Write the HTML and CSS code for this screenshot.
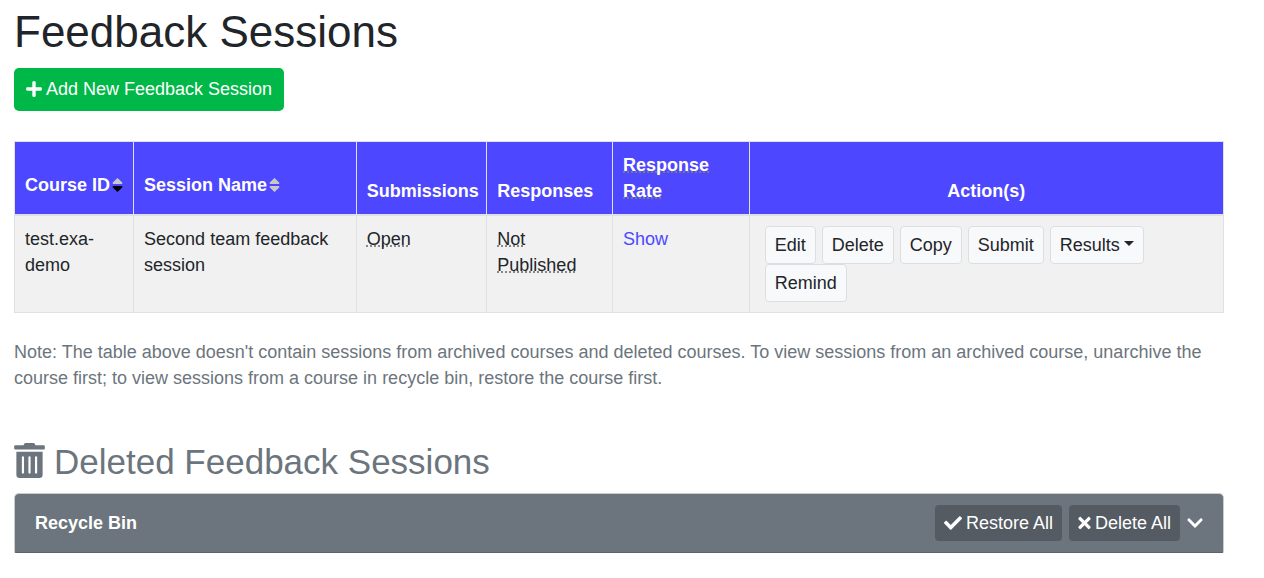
FILE: index.html
```html
<!DOCTYPE html>
<html lang="en">
<head>
<meta charset="utf-8">
<meta name="viewport" content="width=device-width, initial-scale=1">
<title>Feedback Sessions</title>
<link rel="stylesheet" href="styles.css">
</head>
<body>
<main class="page">
  <h1 class="page-title">Feedback Sessions</h1>
  <button type="button" class="btn btn-success">
    <svg class="icon icon-plus" viewBox="0 0 448 512" aria-hidden="true"><path d="M416 208H272V64c0-17.67-14.33-32-32-32h-32c-17.67 0-32 14.33-32 32v144H32c-17.67 0-32 14.33-32 32v32c0 17.67 14.33 32 32 32h144v144c0 17.67 14.33 32 32 32h32c17.67 0 32-14.33 32-32V304h144c17.67 0 32-14.33 32-32v-32c0-17.67-14.33-32-32-32z"/></svg>
    Add New Feedback Session
  </button>

  <table class="sessions">
    <colgroup>
      <col class="col-course"><col class="col-name"><col class="col-submissions"><col class="col-responses"><col class="col-rate"><col>
    </colgroup>
    <thead>
      <tr>
        <th scope="col"><button type="button" class="sort">Course ID
          <svg class="icon icon-sort" viewBox="0 0 320 512" aria-hidden="true"><path class="sort-idle" d="M279 224H41c-21.400 0-32.100-25.900-17-41L143 64c9.400-9.400 24.600-9.400 33.900 0l119 119c15.200 15.100 4.500 41-16.900 41z"/><path class="sort-active" d="M41 288h238c21.400 0 32.100 25.900 17 41L177 448c-9.400 9.400-24.600 9.400-33.900 0L24 329c-15.100-15.100-4.400-41 17-41z"/></svg></button></th>
        <th scope="col"><button type="button" class="sort">Session Name
          <svg class="icon icon-sort" viewBox="0 0 320 512" aria-hidden="true"><path class="sort-idle" d="M279 224H41c-21.400 0-32.100-25.900-17-41L143 64c9.400-9.400 24.600-9.400 33.900 0l119 119c15.200 15.100 4.500 41-16.900 41zM41 288h238c21.400 0 32.100 25.900 17 41L177 448c-9.400 9.400-24.600 9.400-33.900 0L24 329c-15.100-15.100-4.400-41 17-41z"/></svg></button></th>
        <th scope="col">Submissions</th>
        <th scope="col">Responses</th>
        <th scope="col"><span class="hint">Response Rate</span></th>
        <th scope="col" class="center">Action(s)</th>
      </tr>
    </thead>
    <tbody>
      <tr>
        <td>test.exa-demo</td>
        <td>Second team feedback session</td>
        <td><span class="hint">Open</span></td>
        <td><span class="hint">Not Published</span></td>
        <td><a href="#rate" class="link">Show</a></td>
        <td>
          <div class="actions">
            <button type="button" class="btn btn-light">Edit</button>
            <button type="button" class="btn btn-light">Delete</button>
            <button type="button" class="btn btn-light">Copy</button>
            <button type="button" class="btn btn-light">Submit</button>
            <button type="button" class="btn btn-light">Results<span class="caret"></span></button>
            <button type="button" class="btn btn-light">Remind</button>
          </div>
        </td>
      </tr>
    </tbody>
  </table>

  <p class="note">Note: The table above doesn't contain sessions from archived courses and deleted courses. To view sessions from an archived course, unarchive the course first; to view sessions from a course in recycle bin, restore the course first.</p>

  <h2 class="deleted-title">
    <svg class="icon icon-trash" viewBox="0 0 448 512" aria-hidden="true"><path d="M32 464a48 48 0 0 0 48 48h288a48 48 0 0 0 48-48V128H32zm272-256a16 16 0 0 1 32 0v224a16 16 0 0 1-32 0zm-96 0a16 16 0 0 1 32 0v224a16 16 0 0 1-32 0zm-96 0a16 16 0 0 1 32 0v224a16 16 0 0 1-32 0zM432 32H312l-9.400-18.700A24 24 0 0 0 281.100 0H166.800a23.720 23.720 0 0 0-21.400 13.300L136 32H16A16 16 0 0 0 0 48v32a16 16 0 0 0 16 16h416a16 16 0 0 0 16-16V48a16 16 0 0 0-16-16z"/></svg>
    Deleted Feedback Sessions
  </h2>
  <section class="bin">
    <strong class="bin-title">Recycle Bin</strong>
    <button type="button" class="btn btn-dark">
      <svg class="icon icon-check" viewBox="0 0 512 512" aria-hidden="true"><path d="M173.898 439.404l-166.400-166.400c-9.997-9.997-9.997-26.206 0-36.204l36.203-36.204c9.997-9.998 26.207-9.998 36.204 0L192 312.690 432.095 72.596c9.997-9.997 26.207-9.997 36.204 0l36.203 36.204c9.997 9.997 9.997 26.206 0 36.204l-294.400 294.401c-9.998 9.997-26.207 9.997-36.204-.001z"/></svg>
      Restore All
    </button>
    <button type="button" class="btn btn-dark">
      <svg class="icon icon-times" viewBox="0 0 352 512" aria-hidden="true"><path d="M242.720 256l100.070-100.070c12.280-12.280 12.280-32.190 0-44.480l-22.240-22.240c-12.280-12.280-32.190-12.280-44.480 0L176 189.280 75.930 89.210c-12.280-12.280-32.190-12.280-44.480 0L9.210 111.450c-12.280 12.280-12.280 32.190 0 44.480L109.280 256 9.210 356.070c-12.280 12.280-12.280 32.190 0 44.480l22.240 22.240c12.280 12.280 32.200 12.280 44.480 0L176 322.720l100.070 100.070c12.280 12.280 32.200 12.280 44.480 0l22.240-22.240c12.280-12.280 12.280-32.190 0-44.480L242.720 256z"/></svg>
      Delete All
    </button>
    <button type="button" class="toggle" aria-label="Expand recycle bin">
      <svg class="icon icon-chevron" viewBox="0 0 448 512" aria-hidden="true"><path d="M207.029 381.476L12.686 187.132c-9.373-9.373-9.373-24.569 0-33.941l22.667-22.667c9.357-9.357 24.522-9.375 33.901-.040L224 284.505l154.745-154.021c9.379-9.335 24.544-9.317 33.901.040l22.667 22.667c9.373 9.373 9.373 24.569 0 33.941L240.971 381.476c-9.373 9.372-24.569 9.372-33.942 0z"/></svg>
    </button>
  </section>
</main>
</body>
</html>
```
FILE: styles.css
```css
* {
  box-sizing: border-box;
}

body {
  margin: 0;
  background: #fff;
  color: #212529;
  font: 18px/26px "Liberation Sans", Arial, sans-serif;
}

button {
  font: inherit;
  cursor: pointer;
}

.page {
  padding: 5px 40px 24px 14px;
}

.page-title {
  margin: 0 0 10px;
  font-size: 44px;
  font-weight: 400;
  line-height: 53px;
}

.icon {
  flex: none;
  fill: currentColor;
}

.btn {
  display: inline-flex;
  align-items: center;
  gap: 4px;
  padding: 5px 9px;
  border: 0;
  border-radius: 4px;
  white-space: nowrap;
}

.btn-success {
  padding: 8px 12px 9px;
  border-radius: 5px;
  background: #00b847;
  color: #fff;
}

.icon-plus {
  width: 16px;
  height: 18px;
}

.sessions {
  width: 100%;
  margin: 30px 0 26px;
  border-collapse: collapse;
  table-layout: fixed;
}

.col-course {
  width: 9.85%;
}

.col-name {
  width: 18.42%;
}

.col-submissions {
  width: 10.8%;
}

.col-responses {
  width: 10.4%;
}

.col-rate {
  width: 11.3%;
}

.sessions th,
.sessions td {
  padding: 10px;
  border: 1px solid #dee2e6;
  text-align: left;
}

.sessions th {
  border-bottom-width: 2px;
  background: #4d47ff;
  color: #fff;
  vertical-align: bottom;
}

.sessions td {
  background: #f1f1f1;
  vertical-align: top;
}

.sessions .center {
  text-align: center;
}

.sort {
  display: flex;
  align-items: center;
  gap: 2px;
  padding: 0 0 6px;
  border: 0;
  background: none;
  color: inherit;
  white-space: nowrap;
}

.icon-sort {
  width: 11px;
  height: 18px;
}

.sort-idle {
  fill: #c8c8c8;
}

.sort-active {
  fill: #000;
}

.hint {
  text-decoration: underline dotted #7d7d7d;
  text-decoration-skip-ink: none;
}

.link {
  color: #4d47ff;
  text-decoration: none;
}

.actions {
  display: flex;
  flex-wrap: wrap;
  column-gap: 6px;
  padding: 0 5px;
}

.actions .btn:nth-last-child(2) {
  margin-right: 40px;
}

.btn-light {
  border: 1px solid #dcdfe2;
  background: #f8f9fa;
  color: #212529;
}

.caret {
  margin-bottom: 4px;
  border: 5px solid transparent;
  border-top-color: currentColor;
  border-bottom: 0;
}

.note {
  margin: 0 0 50px;
  color: #6c757d;
}

.deleted-title {
  display: flex;
  align-items: center;
  gap: 9px;
  margin: 0 0 10px;
  color: #6c757d;
  font-size: 35px;
  font-weight: 400;
  line-height: 42px;
}

.icon-trash {
  width: 31px;
  height: 35px;
  margin-bottom: 4px;
}

.bin {
  display: flex;
  align-items: center;
  gap: 7px;
  padding: 11px 20px;
  border: 1px solid #c9cdd0;
  border-bottom-color: #5c636a;
  border-radius: 5px 5px 2px 2px;
  background: #6c757d;
  color: #fff;
}

.bin-title {
  margin-right: auto;
}

.btn-dark {
  background: #545b62;
  color: #fff;
}

.icon-check {
  width: 18px;
  height: 18px;
}

.icon-times {
  width: 13px;
  height: 18px;
}

.toggle {
  display: flex;
  padding: 0;
  border: 0;
  background: none;
  color: #fff;
}

.icon-chevron {
  width: 16px;
  height: 18px;
}
```
